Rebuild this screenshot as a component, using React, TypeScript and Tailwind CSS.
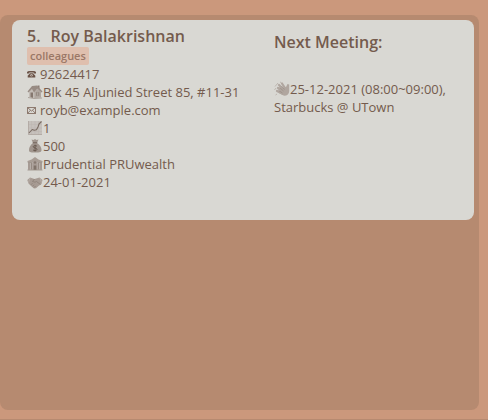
import type { ReactNode } from "react";

function Icon({ children }: { children: ReactNode }) {
  return (
    <svg viewBox="0 0 16 16" className="size-4 shrink-0" fill="none" aria-hidden="true">
      {children}
    </svg>
  );
}

function PhoneIcon() {
  return (
    <svg viewBox="0 0 10 10" className="mr-[3px] size-2.5 shrink-0" aria-hidden="true">
      <path d="M0 4.500V3.300Q0.500 2 2.500 2h4Q8.500 2 9 3.300v1.200H6.700V3.600H2.300v0.900z" fill="#6b5347" />
      <path d="M3 4.200h3L8.300 6.700V8.500H0.700V6.700z" fill="#6b5347" />
      <circle cx="4.500" cy="6.300" r="1.200" fill="#c4bcb5" />
      <circle cx="4.500" cy="6.300" r="0.500" fill="#6b5347" />
    </svg>
  );
}

function MailIcon() {
  return (
    <svg viewBox="0 0 10 10" className="mr-[3px] size-2.5 shrink-0" fill="none" stroke="#7a6255" strokeWidth="0.8" aria-hidden="true">
      <path d="M0.5 2.500h8v6h-8zM0.5 2.500l4 3.500 4-3.500M0.5 8.500l2.900-3.200M8.500 8.500L5.600 5.300" />
    </svg>
  );
}

function HouseIcon() {
  return (
    <Icon>
      <path d="M10.500 1.500h2v4h-2z" fill="#8b7d74" />
      <path d="M2 8l4-4 6 1 2 3v5.500L7 14l-5-1z" fill="#c3bcb6" />
      <path d="M7.500 8.500L10.500 5 14 8v5.500l-6.500 0.500z" fill="#b0a7a0" />
      <path d="M0.500 7.500L5 2l5-0.500 5.500 6-1 1-4.200-4L7 8.500 5 5 1.500 8.500z" fill="#988b83" />
      <path d="M3.500 8.500H6V14l-2.500-0.700z" fill="#85776e" />
      <path d="M9 8.500h3.200v3H9z" fill="#85776e" />
      <path d="M10.600 8.500v3M9 10h3.200" stroke="#c9c4be" strokeWidth="0.500" />
      <path d="M1 13.500l6 1 8-0.500" stroke="#aca39b" />
    </Icon>
  );
}

function ChartIcon() {
  return (
    <Icon>
      <path d="M1 1h14v14H1z" fill="#c6c1bc" />
      <path d="M4.500 1v14M8 1v14M11.500 1v14M1 4.500h14M1 8h14M1 11.500h14" stroke="#bdb7b1" strokeWidth="0.600" />
      <path d="M1.500 1v13.500H15" stroke="#b0a7a1" strokeWidth="0.800" />
      <path d="M2 13l3.200-3.500 2 0.800 2.300-0.500L11 7l1-3 2.500-2.500" stroke="#796b62" strokeWidth="1.100" strokeLinejoin="round" />
    </Icon>
  );
}

function MoneyBagIcon() {
  return (
    <Icon>
      <path d="M4.500 1.500L6.500 2 8 1l1.500 1 2-0.500L10 5c3 1.500 4.500 4.500 4.500 7 0 2-1.500 2.500-6.500 2.500s-6-0.500-6-2.500c0-2.500 1.500-5.500 4-7z" fill="#a0958d" />
      <path d="M5.800 4.700h4.400" stroke="#7c6e65" strokeWidth="1.200" />
      <path d="M10 8.200C9 7.300 6.200 7.400 6.200 8.800S10 9.800 10 11.300 7 12.900 6 11.900M8.100 6.700v6.800" stroke="#65564c" strokeWidth="0.900" />
    </Icon>
  );
}

function BankIcon() {
  return (
    <Icon>
      <path d="M0.500 5l4-1.500L8 1l3.500 2.500 4 1.500v1.500h-15z" fill="#a89d95" />
      <path d="M1 6.500h14V14H1z" fill="#b9b0aa" />
      <path d="M2 7v6.500M4.500 7v6.500M11.500 7v6.500M14 7v6.500" stroke="#968a82" strokeWidth="1.100" />
      <path d="M5.500 5.500L8 3.500l2.500 2V14h-5z" fill="#a79c95" />
      <path d="M6.700 9.500h2.600V14H6.700z" fill="#80736a" />
      <path d="M0.500 14h15M1 6.500h4M11 6.500h4" stroke="#9b8f87" strokeWidth="0.800" />
      <circle cx="8" cy="6.500" r="1.200" fill="#867970" />
    </Icon>
  );
}

function HandshakeIcon() {
  return (
    <Icon>
      <path d="M0.300 6l2.700-2.500L7.500 5 12.500 3.500l3 2.500-1 4-3 2-2.500 2.200-2 0.300-3.500-3L1.500 9.500z" fill="#a79b93" />
      <path d="M7.500 5L5.500 7.500 8 8.200l1.500-0.700 4 3M4 10.800l1.500-1.600M5.500 12.300L7 10.700M7.200 13.500l1.300-1.500" stroke="#8c7f76" strokeWidth="0.800" />
      <path d="M3 4L1.500 8.500M13 4l1.500 4.500" stroke="#bdb4ad" strokeWidth="0.700" />
    </Icon>
  );
}

function WaveIcon() {
  return (
    <Icon>
      <path d="M4 7l7 5M5 4l6 6M8 2.500l4 6M3 10l6 3" stroke="#b0a69f" strokeWidth="2.200" strokeLinecap="round" />
      <path d="M6 8l6-2 1.500-3 1.700 0.500v6.500c0 3-2 4.800-5 4.800L5 12z" fill="#b0a69f" />
      <path d="M5.500 6.500l4 3.500M7.500 5l3 3.500M4.500 9.500l4 2.500" stroke="#948880" strokeWidth="0.600" />
      <path d="M1 5.500L4 2M0.500 9L2 7M1.500 14l1.500-1M6 1.500L7 1" stroke="#b9b1aa" strokeWidth="0.900" />
    </Icon>
  );
}

function Row({ icon, children }: { icon: ReactNode; children: ReactNode }) {
  return (
    <li className="flex items-center whitespace-nowrap">
      {icon}
      <span>{children}</span>
    </li>
  );
}

export default function App() {
  return (
    <div className="min-h-screen border-b border-[#b78a70] bg-[#cb987c] pt-[15px] pr-[9px] pb-[9px] font-['Open_Sans','Noto_Sans',sans-serif] text-[#745b4d]">
      <main className="flex min-h-[395px] flex-col rounded-lg bg-[#b68a70] pt-[5px] pr-[5px] pl-3">
        <article className="grid min-h-[200px] grid-cols-[247px_1fr] rounded-lg bg-[#d9d8d3] pl-[15px]">
          <section className="pt-[5px]">
            <h2 className="flex gap-2.5 text-base leading-[22px] font-semibold">
              <span>5.</span>
              <span>Roy Balakrishnan</span>
            </h2>
            <div className="flex">
              <span className="rounded-xs bg-[#dfbfae] px-[3px] text-[11px] leading-[18px] font-semibold text-[#9a7766]">
                colleagues
              </span>
            </div>
            <ul className="text-[13px] leading-[18px] font-medium">
              <Row icon={<PhoneIcon />}>92624417</Row>
              <Row icon={<HouseIcon />}>Blk 45 Aljunied Street 85, #11-31</Row>
              <Row icon={<MailIcon />}>royb@example.com</Row>
              <Row icon={<ChartIcon />}>1</Row>
              <Row icon={<MoneyBagIcon />}>500</Row>
              <Row icon={<BankIcon />}>Prudential PRUwealth</Row>
              <Row icon={<HandshakeIcon />}>24-01-2021</Row>
            </ul>
          </section>
          <section className="pt-[11px]">
            <h2 className="text-base leading-[22px] font-semibold">Next Meeting:</h2>
            <div className="pt-[27px] text-[13px] leading-[18px] font-medium">
              <p className="flex items-center whitespace-nowrap">
                <WaveIcon />
                25-12-2021 (08:00~09:00),
              </p>
              <p>Starbucks @ UTown</p>
            </div>
          </section>
        </article>
      </main>
    </div>
  );
}
